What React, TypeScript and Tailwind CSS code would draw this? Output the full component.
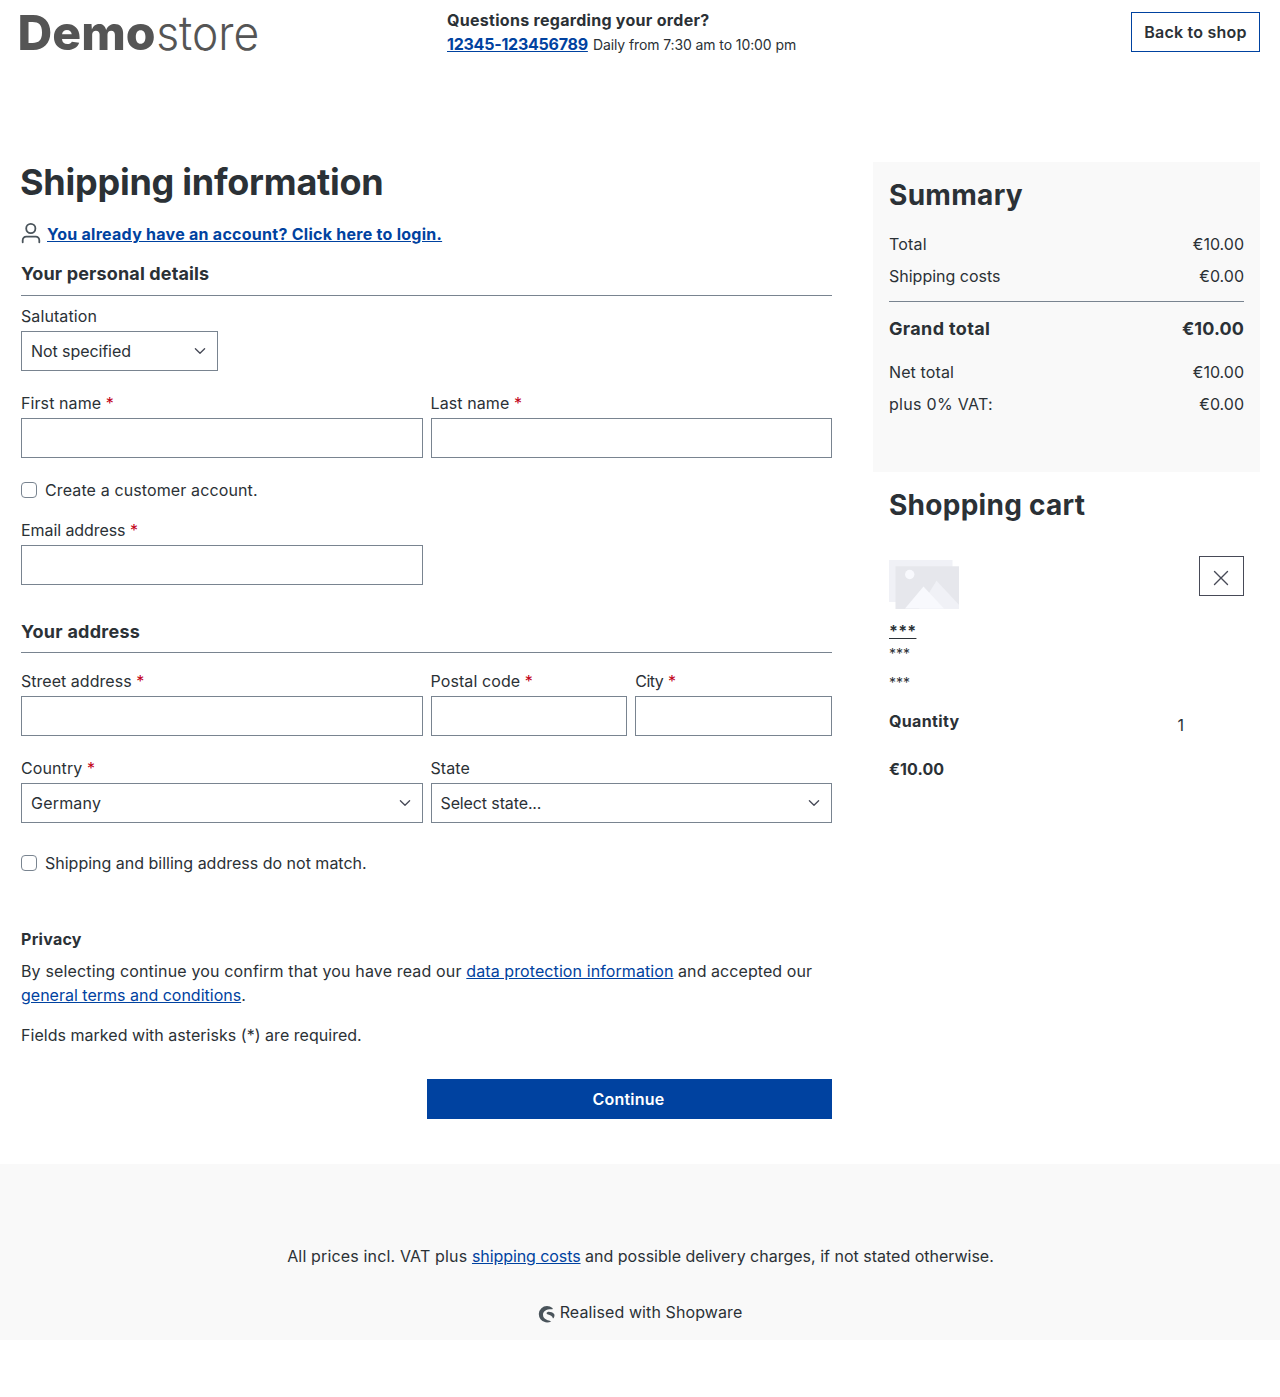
import type { ReactNode } from "react";

const link = "text-[#0042a0] underline";

function Label({ children, required }: { children: ReactNode; required?: boolean }) {
  return (
    <span className="block h-6 mb-[3px] whitespace-nowrap tracking-[0.09px]">
      {children}
      {required && <span className="text-[#c20017]"> *</span>}
    </span>
  );
}

function TextField({ label }: { label: ReactNode }) {
  return (
    <label className="block">
      <Label required>{label}</Label>
      <input className="block w-full h-10 border border-[#798490] bg-white px-[9px] outline-none" />
    </label>
  );
}

function SelectField({ label, value, required }: { label: string; value: ReactNode; required?: boolean }) {
  return (
    <div>
      <Label required={required}>{label}</Label>
      <div className="flex h-10 items-center justify-between border border-[#798490] bg-white pl-[9px] pr-[11px]">
        <span>{value}</span>
        <svg width="12" height="8" viewBox="0 0 12 8" fill="none" stroke="#474a57" strokeWidth="1.35" strokeLinecap="round" strokeLinejoin="round">
          <path d="M1.4 1.8 6 6.2l4.6-4.4" />
        </svg>
      </div>
    </div>
  );
}

function CheckField({ label }: { label: ReactNode }) {
  return (
    <label className="flex h-6 items-center gap-2">
      <input type="checkbox" className="size-4 appearance-none rounded border border-[#798490] bg-white" />
      <span>{label}</span>
    </label>
  );
}

function SectionTitle({ children }: { children: ReactNode }) {
  return <h2 className="border-b border-[#798490] text-lg leading-[27px] font-bold">{children}</h2>;
}

function Row({ label, value }: { label: ReactNode; value: string }) {
  return (
    <div className="flex justify-between h-6">
      <span>{label}</span>
      <span>{value}</span>
    </div>
  );
}

function Header() {
  return (
    <header className="flex h-[162px] items-start px-5">
      <div className="-ml-5 w-[447px] shrink-0">
        <svg width="280" height="70" viewBox="0 0 280 70" fill="#555" fontFamily="Inter, sans-serif" fontSize="48">
          <text x="17.6" y="49.8" fontWeight="800" textLength="138" lengthAdjust="spacingAndGlyphs">Demo</text>
          <text x="156.2" y="49.8" fontWeight="260" textLength="103" lengthAdjust="spacingAndGlyphs">store</text>
        </svg>
      </div>
      <div className="pt-2">
        <div className="font-bold tracking-[0.29px]">Questions regarding your order?</div>
        <div className="flex">
          <a href="#" className="font-bold tracking-[-0.24px] text-[#0042a0] underline">12345-123456789</a>
          <span className="ml-[5px] text-sm leading-[25px] tracking-[-0.1px]">Daily from 7:30 am to 10:00 pm</span>
        </div>
      </div>
      <button className="mt-3 ml-auto h-10 w-[129px] border border-[#0042a0] font-semibold tracking-[0.24px]">Back to shop</button>
    </header>
  );
}

function CheckoutForm() {
  return (
    <main className="w-[811px] shrink-0">
      <h1 className="-ml-px h-[60px] text-4xl leading-[41px] font-bold tracking-[-0.25px]">Shipping information</h1>
      <div className="flex h-[38px] items-start">
        <svg width="20" height="22" viewBox="0 0 20 22" className="mr-1.5" fill="none" stroke="#4a545b" strokeWidth="1.8" strokeLinecap="round">
          <circle cx="9.8" cy="6.5" r="4.6" />
          <path d="M1.7 20.3v-2.1a3.5 3.5 0 0 1 3.5-3.5h9.6a3.5 3.5 0 0 1 3.5 3.5v2.1" />
        </svg>
        <a href="#" className="font-bold tracking-[0.265px] text-[#0042a0] underline">You already have an account? Click here to login.</a>
      </div>
      <SectionTitle>
        <span className="block h-[35px] tracking-[0.14px]">Your personal details</span>
      </SectionTitle>
      <div className="mt-2 w-[197px]">
        <SelectField label="Salutation" value={<span className="tracking-[-0.08px]">Not specified</span>} />
      </div>
      <div className="mt-5 grid grid-cols-2 gap-2">
        <TextField label="First name" />
        <TextField label="Last name" />
      </div>
      <div className="mt-5">
        <CheckField label={<span className="tracking-[0.12px]">Create a customer account.</span>} />
      </div>
      <div className="mt-4 grid grid-cols-2 gap-2">
        <TextField label={<span className="tracking-[-0.08px]">Email address</span>} />
      </div>
      <div className="mt-[33px]">
        <SectionTitle>
          <span className="block h-[34px] tracking-[0.27px]">Your address</span>
        </SectionTitle>
      </div>
      <div className="mt-4 grid grid-cols-4 gap-2">
        <div className="col-span-2">
          <TextField label={<span className="tracking-[0.03px]">Street address</span>} />
        </div>
        <TextField label="Postal code" />
        <TextField label={<span className="tracking-[-0.5px]">City</span>} />
      </div>
      <div className="mt-5 grid grid-cols-2 gap-2">
        <SelectField label="Country" value={<span className="tracking-[0.2px]">Germany</span>} required />
        <SelectField label="State" value={<span className="tracking-[-0.12px]">Select state...</span>} />
      </div>
      <div className="mt-7">
        <CheckField label="Shipping and billing address do not match." />
      </div>
      <h3 className="mt-[52px] font-bold tracking-[0.28px]">Privacy</h3>
      <p className="mt-2">
        <span className="tracking-[0.155px]">By selecting continue you confirm that you have read our </span>
        <a href="#" className="tracking-[0.09px] text-[#0042a0] underline">data protection information</a>
        <span className="tracking-[0.07px]"> and accepted our </span>
        <a href="#" className={link}>general terms and conditions</a>.
      </p>
      <p className="mt-4 tracking-[0.03px]">Fields marked with asterisks (*) are required.</p>
      <button className="mt-8 ml-auto block h-10 w-[405px] bg-[#0042a0] pr-0.5 font-semibold tracking-[0.2px] text-white">Continue</button>
    </main>
  );
}

function Summary() {
  return (
    <section className="h-[310px] bg-[#f9f9f9] px-4 pt-4">
      <h2 className="h-[54px] text-[28px] leading-[34px] font-bold tracking-[0.3px]">Summary</h2>
      <Row label={<span className="tracking-[0.2px]">Total</span>} value="€10.00" />
      <div className="mt-2 border-b border-[#798490] pb-[13px]">
        <Row label="Shipping costs" value="€0.00" />
      </div>
      <div className="mt-[13px] mb-[18px] flex h-[27px] justify-between text-lg leading-[27px] font-bold">
        <span className="tracking-[0.36px]">Grand total</span>
        <span className="tracking-[0.1px]">€10.00</span>
      </div>
      <Row label={<span className="tracking-[0.12px]">Net total</span>} value="€10.00" />
      <div className="mt-2">
        <Row label={<span className="tracking-[0.3px]">plus 0% VAT:</span>} value="€0.00" />
      </div>
    </section>
  );
}

function Cart() {
  return (
    <section className="px-4 pt-4">
      <h2 className="text-[28px] leading-[34px] font-bold tracking-[0.27px]">Shopping cart</h2>
      <div className="mt-[34px] flex justify-between">
        <svg width="70" height="49" viewBox="0 0 70 49" className="mt-1">
          <rect width="63.5" height="42" fill="#f0f1f6" />
          <rect x="6.5" y="6.3" width="63.5" height="42.7" fill="#e6e7ec" />
          <circle cx="20.7" cy="14.5" r="4.7" fill="#f8f9fd" />
          <path d="M30 49 47.5 20.8 70 44.8V49Z" fill="#f0f1f6" />
          <path d="M16 48.4 34.5 26.4 55 48.4Z" fill="#f8f9fd" />
        </svg>
        <button className="flex h-10 w-[45px] items-center justify-center border border-[#474a57] pt-1 pr-px">
          <svg width="16" height="16" viewBox="0 0 16 16" fill="none" stroke="#474a57" strokeWidth="1.4" strokeLinecap="round">
            <path d="m1.5 1.5 13 13m0-13-13 13" />
          </svg>
        </button>
      </div>
      <div className="mt-[10px] h-6">
        <a href="#" className="font-bold tracking-[0.2px] underline">***</a>
      </div>
      <div className="text-sm leading-[21px]">***</div>
      <div className="mt-2 text-sm leading-[21px]">***</div>
      <div className="mt-4 flex justify-between pr-[60px]">
        <span className="font-bold tracking-[0.35px]">Quantity</span>
        <span className="mt-1">1</span>
      </div>
      <div className="mt-5 font-bold tracking-[0.1px]">€10.00</div>
    </section>
  );
}

function Footer() {
  return (
    <footer className="mt-[45px] h-[176px] bg-[#f9f9f9] pt-20 text-center">
      <p className="pl-px">
        <span className="tracking-[0.16px]">All prices incl. VAT plus </span>
        <a href="#" className="tracking-[-0.08px] text-[#0042a0] underline">shipping costs</a> and possible delivery charges, if not stated otherwise.
      </p>
      <div className="mt-8 flex justify-center">
        <svg width="17" height="17" viewBox="0 0 17 17" className="mt-1.5 mr-[5px]" fill="#4a545b">
          <path d="M14.4 2.1A8.2 8.2 0 1 0 13.3 15.3C11 14.6 5 13.6 5 8.8 5 4.8 8.6 2.9 14.4 3.2c.4 0 .4-.8 0-1.1Z" />
          <path d="M16.3 8.2C14.6 6.4 11.8 5.6 9.8 5.9c-1.7.3-1.6 2 .2 2.7 2.2.8 4.3 1.2 5 3.9 1.3-.8 1.8-2.9 1.3-4.3Z" />
        </svg>
        <span className="tracking-[0.1px]">Realised with Shopware</span>
      </div>
    </footer>
  );
}

export default function App() {
  return (
    <div className="min-h-[1397px] bg-white font-['Inter',sans-serif] text-base text-[#2b3136]">
      <Header />
      <div className="flex items-start pl-[21px]">
        <CheckoutForm />
        <aside className="ml-[41px] w-[387px]">
          <Summary />
          <Cart />
        </aside>
      </div>
      <Footer />
    </div>
  );
}
